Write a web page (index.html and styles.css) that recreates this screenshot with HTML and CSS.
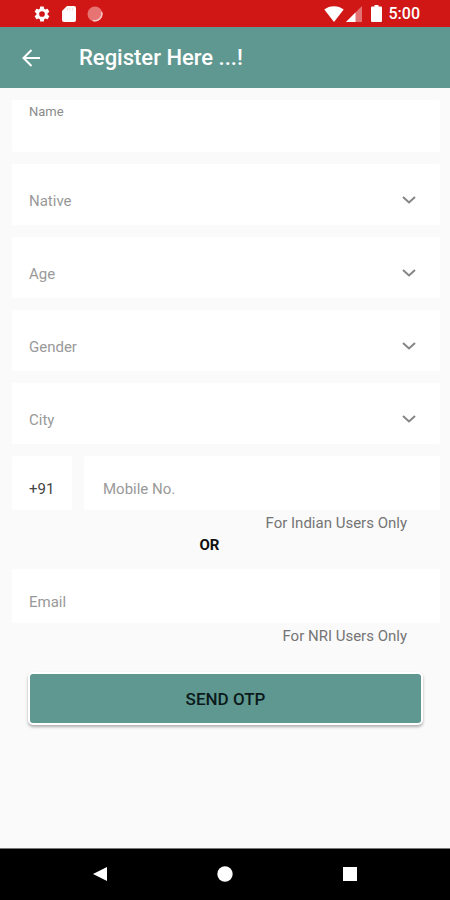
FILE: index.html
```html
<!DOCTYPE html>
<html lang="en">
<head>
<meta charset="utf-8">
<meta name="viewport" content="width=device-width, initial-scale=1">
<title>Register Here ...!</title>
<link rel="stylesheet" href="styles.css">
</head>
<body>
<div class="status">
  <div class="status-group notices">
    <svg width="18" height="18" viewBox="0 0 24 24"><path fill="#fff" d="M19.4 13c.04-.3.06-.65.06-1s-.02-.7-.07-1l2.1-1.65a.5.5 0 0 0 .12-.64l-2-3.46a.5.5 0 0 0-.6-.22l-2.5 1a7.300 7.300 0 0 0-1.700-.98l-.38-2.650A.5.5 0 0 0 14 2h-4a.5.5 0 0 0-.5.400l-.38 2.650c-.6.250-1.170.58-1.690.98l-2.500-1a.5.5 0 0 0-.600.220l-2 3.460a.5.5 0 0 0 .120.640L4.600 11a8 8 0 0 0 0 2l-2.150 1.650a.5.5 0 0 0-.120.640l2 3.460c.120.220.380.300.600.220l2.500-1c.520.400 1.080.730 1.690.98l.38 2.650c.040.240.250.400.5.400h4c.250 0 .460-.160.5-.400l.38-2.650c.600-.250 1.170-.58 1.690-.98l2.500 1c.220.080.480 0 .600-.220l2-3.460a.5.5 0 0 0-.120-.640L19.400 13ZM12 15.800a3.800 3.800 0 1 1 0-7.600 3.800 3.800 0 0 1 0 7.600Z"/></svg>
    <svg width="14" height="18" viewBox="0 0 14 18"><path fill="#fff" d="M5 1h7a2 2 0 0 1 2 2v12a2 2 0 0 1-2 2H2a2 2 0 0 1-2-2V6Z"/><path stroke="#d01716" d="M5.500 3v2.500M8 3v2.500M10.500 3v2.500" opacity=".15"/></svg>
    <svg width="16" height="16" viewBox="0 0 16 16"><circle cx="8" cy="8" r="7.500" fill="#e77473"/><path fill="none" stroke="#f6c9c8" stroke-width="1.500" d="M14.500 6A6.800 6.800 0 0 1 6 14.500"/></svg>
  </div>
  <div class="status-group">
    <svg width="20" height="16" viewBox="0 0 20 16"><path fill="#fff" d="M10 16 .3 3.600C3 1.500 6.300.3 10 .3s7 1.200 9.700 3.300Z"/></svg>
    <svg width="16" height="16" viewBox="0 0 16 16"><path fill="#fff" opacity=".4" d="M16 0v16H0Z"/><path fill="#fff" d="M9.500 6.500V16H0Z"/></svg>
    <svg class="battery" width="11" height="17" viewBox="0 0 11 17"><path fill="#fff" d="M3.500 0h4v1.500H10a1 1 0 0 1 1 1V16a1 1 0 0 1-1 1H1a1 1 0 0 1-1-1V2.500a1 1 0 0 1 1-1h2.500Z"/></svg>
    <span class="clock">5:00</span>
  </div>
</div>
<header class="appbar">
  <button class="back" type="button" aria-label="Back">
    <svg width="18" height="18" viewBox="0 0 18 18"><path fill="none" stroke="#fff" stroke-width="2" d="M9.500 1 1.500 9l8 8M1.500 9H18"/></svg>
  </button>
  <h1 class="title">Register Here ...!</h1>
</header>
<main>
  <form class="form">
    <div class="field name">
      <label for="name">Name</label>
      <input id="name" type="text">
    </div>
    <div class="field pick">
      <select aria-label="Native"><option>Native</option></select>
      <svg class="chevron" viewBox="0 0 14 8"><path d="m1 1 6 5.500L13 1"/></svg>
    </div>
    <div class="field pick">
      <select aria-label="Age"><option>Age</option></select>
      <svg class="chevron" viewBox="0 0 14 8"><path d="m1 1 6 5.500L13 1"/></svg>
    </div>
    <div class="field pick">
      <select aria-label="Gender"><option>Gender</option></select>
      <svg class="chevron" viewBox="0 0 14 8"><path d="m1 1 6 5.500L13 1"/></svg>
    </div>
    <div class="field pick">
      <select aria-label="City"><option>City</option></select>
      <svg class="chevron" viewBox="0 0 14 8"><path d="m1 1 6 5.500L13 1"/></svg>
    </div>
    <div class="phone">
      <input class="entry code" type="text" value="+91" aria-label="Country code">
      <input class="entry mobile" type="tel" placeholder="Mobile No." aria-label="Mobile No.">
    </div>
    <p class="hint">For Indian Users Only</p>
    <p class="or">OR</p>
    <input class="entry email" type="email" placeholder="Email" aria-label="Email">
    <p class="hint">For NRI Users Only</p>
    <button class="send" type="button">SEND OTP</button>
  </form>
</main>
<nav class="navbar">
  <button type="button" aria-label="Back"><svg width="14" height="16" viewBox="0 0 14 16"><path fill="#fff" d="M14 1v14L0 8Z"/></svg></button>
  <button type="button" aria-label="Home"><svg width="16" height="16" viewBox="0 0 16 16"><circle cx="8" cy="8" r="7.700" fill="#fff"/></svg></button>
  <button type="button" aria-label="Recent apps"><svg width="14" height="14" viewBox="0 0 14 14"><path fill="#fff" d="M0 0h14v14H0Z"/></svg></button>
</nav>
</body>
</html>
```
FILE: styles.css
```css
* { box-sizing: border-box; }
body {
  margin: 0;
  min-height: 100vh;
  display: flex;
  flex-direction: column;
  background: #fafafa;
  font: 15px/20px Roboto, "Liberation Sans", sans-serif;
}
svg { display: block; flex: none; }
button, input, select { font: inherit; margin: 0; border: 0; border-radius: 0; outline: 0; }
button { padding: 0; background: none; }
p, h1 { margin: 0; }

.status {
  height: 27px;
  padding: 0 30px 0 33px;
  display: flex;
  align-items: center;
  justify-content: space-between;
  background: #d01716;
}
.status-group { display: flex; align-items: center; gap: 2px; }
.notices { gap: 11px; }
.battery { margin: 0 5px 0 7px; }
.clock { color: #fff; font-size: 16px; font-weight: 500; }

.appbar {
  height: 61px;
  padding: 1px 0 0 22px;
  display: flex;
  align-items: center;
  gap: 39px;
  background: #5f9891;
}
.title { color: #fff; font-size: 22px; line-height: 28px; font-weight: 500; }

main { flex: 1; }
.form {
  padding: 12px 10px 24px 12px;
  display: flex;
  flex-direction: column;
}
.field { margin-bottom: 12px; background: #fff; border-radius: 2px; }
.name { height: 52px; padding: 4px 17px; color: #8b8b8b; font-size: 13px; line-height: 16px; }
.name label, .name input { display: block; }
.name input { width: 100%; height: 28px; padding: 0; background: none; color: #333; font-size: 15px; }
.pick { display: grid; align-items: center; }
.pick select {
  grid-area: 1 / 1;
  width: 100%;
  height: 61px;
  padding: 27px 48px 14px 17px;
  appearance: none;
  background: none;
  color: #999;
}
.chevron {
  grid-area: 1 / 1;
  justify-self: end;
  width: 14px;
  height: 8px;
  margin: 10px 24px 0 0;
  pointer-events: none;
  fill: none;
  stroke: #858585;
  stroke-width: 2;
}
.phone { display: flex; gap: 12px; }
.entry { height: 54px; padding: 23px 17px 11px; background: #fff; border-radius: 2px; color: #444; }
.entry::placeholder { color: #999; opacity: 1; }
.code { width: 60px; padding-right: 0; }
.mobile { flex: 1; min-width: 0; padding-left: 19px; }
.hint { padding: 3px 33px 0 0; text-align: right; color: #747474; }
.or { margin: 2px 0 14px; padding-right: 33px; text-align: center; color: #111; font-weight: 700; }
.send {
  height: 53px;
  margin: 26px 17px 0 16px;
  border: 2px solid #fff;
  border-radius: 5px;
  background: #5f9891;
  box-shadow: 0 2px 3px rgba(0, 0, 0, .3);
  color: #0b1a1a;
  font-size: 17px;
  font-weight: 500;
}

.navbar {
  height: 52px;
  padding: 0 38px 2px;
  display: grid;
  grid-template-columns: repeat(3, 1fr);
  align-items: center;
  border-top: 1px solid #777;
  background: #000;
}
.navbar button { display: flex; justify-content: center; }
```
